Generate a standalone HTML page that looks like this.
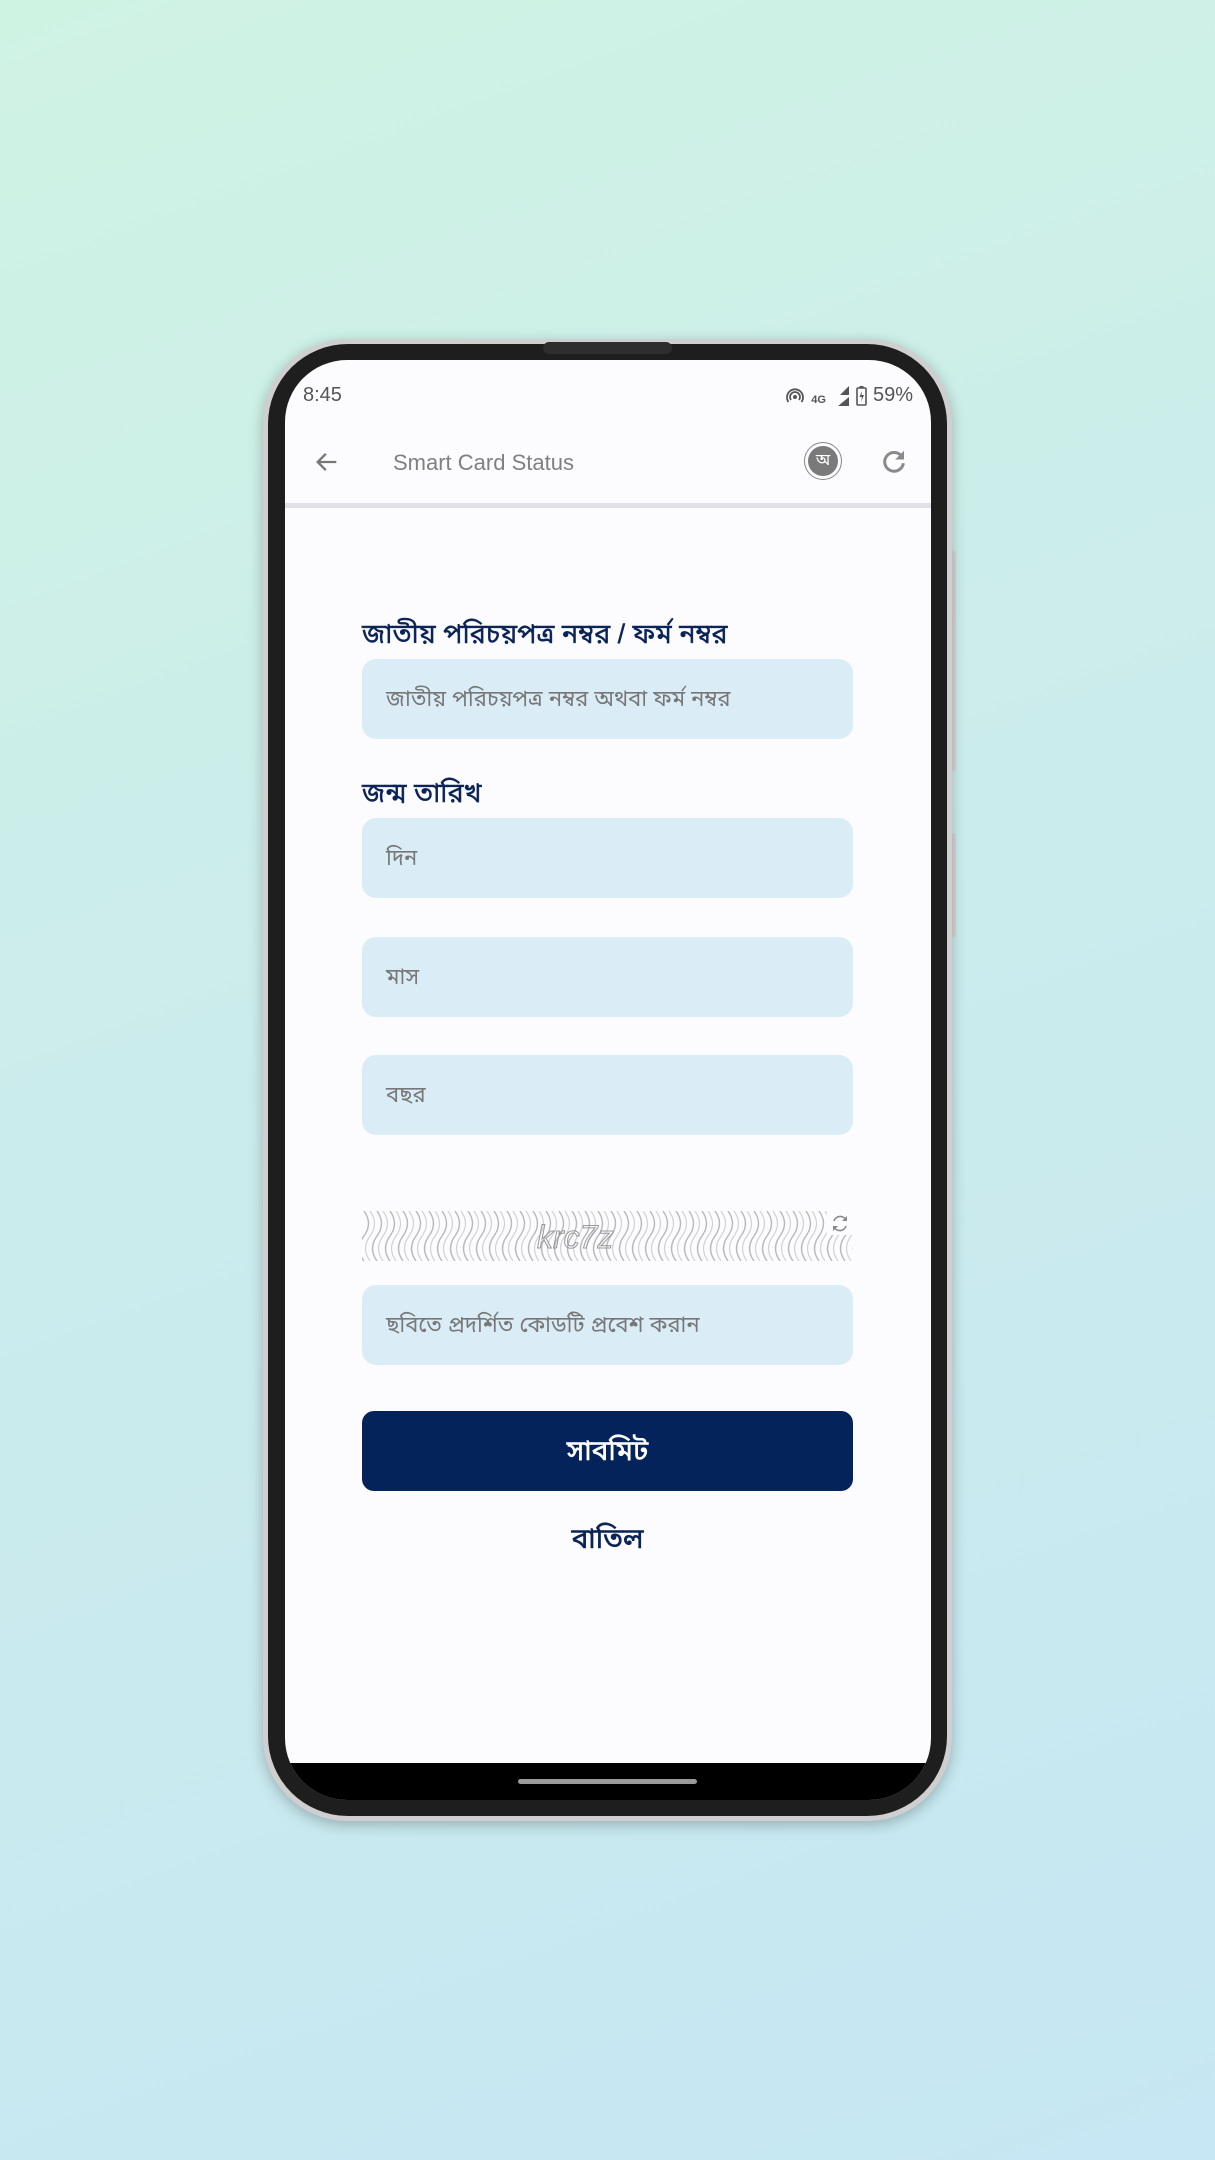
<!DOCTYPE html>
<html><head><meta charset="utf-8"><style>
*{margin:0;padding:0;box-sizing:border-box}
html,body{width:1215px;height:2160px;overflow:hidden}
body{background:linear-gradient(160deg,#cff3e3 0%,#cbecec 45%,#c6e7f3 100%);font-family:"Liberation Sans","Noto Sans Bengali","Lohit Bengali",sans-serif;position:relative}
.abs{position:absolute}
.phone{left:263px;top:339px;width:689px;height:1482px;border-radius:84px;background:#cfcfcf;box-shadow:0 4px 14px rgba(0,0,0,.25)}
.bezel{left:268px;top:344px;width:679px;height:1472px;border-radius:80px;background:#1e1e1e}
.screen{left:285px;top:360px;width:646px;height:1440px;border-radius:62px;background:#fcfbfe;overflow:hidden}
.field{position:absolute;left:77px;width:491px;height:80px;border-radius:14px;background:#daedf7;color:#777;font-size:22px;padding-left:24px;line-height:80px}
.label{position:absolute;left:77px;color:#0b2457;font-size:27px;font-weight:normal;-webkit-text-stroke:0.4px #0b2457}
</style></head><body>
<div class="abs" style="left:950px;top:551px;width:6px;height:220px;background:#d6d6d6;border-radius:3px"></div>
<div class="abs" style="left:950px;top:833px;width:6px;height:104px;background:#d6d6d6;border-radius:3px"></div>
<div class="abs phone"></div>
<div class="abs bezel"></div>
<div class="abs" style="left:543px;top:342px;width:129px;height:12px;border-radius:6px;background:#2e2e2e"></div>
<div class="abs screen">
  <div class="abs" style="left:18px;top:24px;font-size:20px;color:#555">8:45</div>
  <div class="abs" style="right:18px;top:24px;font-size:20px;color:#555;display:flex;align-items:center;gap:6px">
    <svg width="20" height="20" viewBox="0 0 20 20"><circle cx="10" cy="11" r="2" fill="#555"/><path d="M6 14a5 5 0 1 1 8 0M3.5 16a8 8 0 1 1 13 0" fill="none" stroke="#555" stroke-width="1.8"/></svg>
    <span style="font-size:11px;font-weight:bold;margin-top:8px">4G</span>
    <svg width="18" height="22" viewBox="0 0 18 22"><path d="M17 1V10L8 10Z M17 12V21H6Z" fill="#555"/></svg>
    <svg width="11" height="20" viewBox="0 0 11 20"><rect x="1" y="2" width="9" height="17" rx="1" fill="none" stroke="#555" stroke-width="1.6"/><rect x="3.5" y="0" width="4" height="2" fill="#555"/><path d="M6 5 3.5 11H6L5 16 8 9H5.5Z" fill="#555"/></svg>
    <span>59%</span>
  </div>
  <svg class="abs" style="left:28px;top:88px" width="28" height="28" viewBox="0 0 24 24"><path d="M20 12H5M11 5 4 12l7 7" fill="none" stroke="#777" stroke-width="2"/></svg>
  <div class="abs" style="left:108px;top:89px;font-size:22px;color:#808080;line-height:28px">Smart Card Status</div>
  <div class="abs" style="left:519px;top:82px;width:38px;height:38px;border-radius:50%;border:1.5px solid #888;display:flex;align-items:center;justify-content:center"><div style="width:30px;height:30px;border-radius:50%;background:#7a7a7a;color:#fff;font-size:16px;text-align:center;line-height:30px">অ</div></div>
  <svg class="abs" style="left:594px;top:87px" width="30" height="30" viewBox="0 0 24 24"><path d="M18.5 8A7.5 7.5 0 1 0 19.5 13" fill="none" stroke="#8a8a8a" stroke-width="2.4"/><path d="M20 3v7h-7z" fill="#8a8a8a"/></svg>
  <div class="abs" style="left:0;top:143px;width:646px;height:5px;background:#e2e1ea"></div>

  <div class="label" style="top:259px">জাতীয় পরিচয়পত্র নম্বর / ফর্ম নম্বর</div>
  <div class="field" style="top:299px">জাতীয় পরিচয়পত্র নম্বর অথবা ফর্ম নম্বর</div>
  <div class="label" style="top:418px">জন্ম তারিখ</div>
  <div class="field" style="top:458px">দিন</div>
  <div class="field" style="top:577px">মাস</div>
  <div class="field" style="top:695px">বছর</div>

  <svg class="abs" style="left:77px;top:851px" width="491" height="50">
    <defs><pattern id="w" width="13" height="50" patternUnits="userSpaceOnUse"><path d="M2 0Q11 12.5 2 25Q-7 37.5 2 50M15 0Q24 12.5 15 25Q6 37.5 15 50" fill="none" stroke="#b8b8b8" stroke-width="1.4"/><path d="M8 0Q17 12.5 8 25Q-1 37.5 8 50M-5 0Q4 12.5 -5 25" fill="none" stroke="#d2d2d2" stroke-width="1.2"/></pattern></defs>
    <rect width="491" height="50" fill="url(#w)"/>
    <rect x="465" y="0" width="26" height="24" fill="#fcfbfe"/>
    <path d="M484 9A6.5 6.5 0 0 0 472 10M472 16A6.5 6.5 0 0 0 484 15" fill="none" stroke="#888" stroke-width="1.6"/>
    <path d="M485 5v5h-5zM471 20v-5h5z" fill="#888"/>
    <text x="175" y="37" font-size="32" font-style="italic" fill="none" stroke="#999" stroke-width="1" font-family="Liberation Sans">krc7z</text>
  </svg>
  <div class="field" style="top:925px">ছবিতে প্রদর্শিত কোডটি প্রবেশ করান</div>
  <div class="abs" style="left:77px;top:1051px;width:491px;height:80px;border-radius:12px;background:#04235a;color:#fff;font-size:28px;text-align:center;line-height:80px;-webkit-text-stroke:0.6px #fff">সাবমিট</div>
  <div class="abs" style="left:77px;top:1163px;width:491px;text-align:center;color:#0b2457;font-size:28px;-webkit-text-stroke:0.6px #0b2457">বাতিল</div>

  <div class="abs" style="left:0;top:1403px;width:646px;height:40px;background:#000"></div>
  <div class="abs" style="left:233px;top:1419px;width:179px;height:5px;border-radius:3px;background:#9a9a9a"></div>
</div>
</body></html>
